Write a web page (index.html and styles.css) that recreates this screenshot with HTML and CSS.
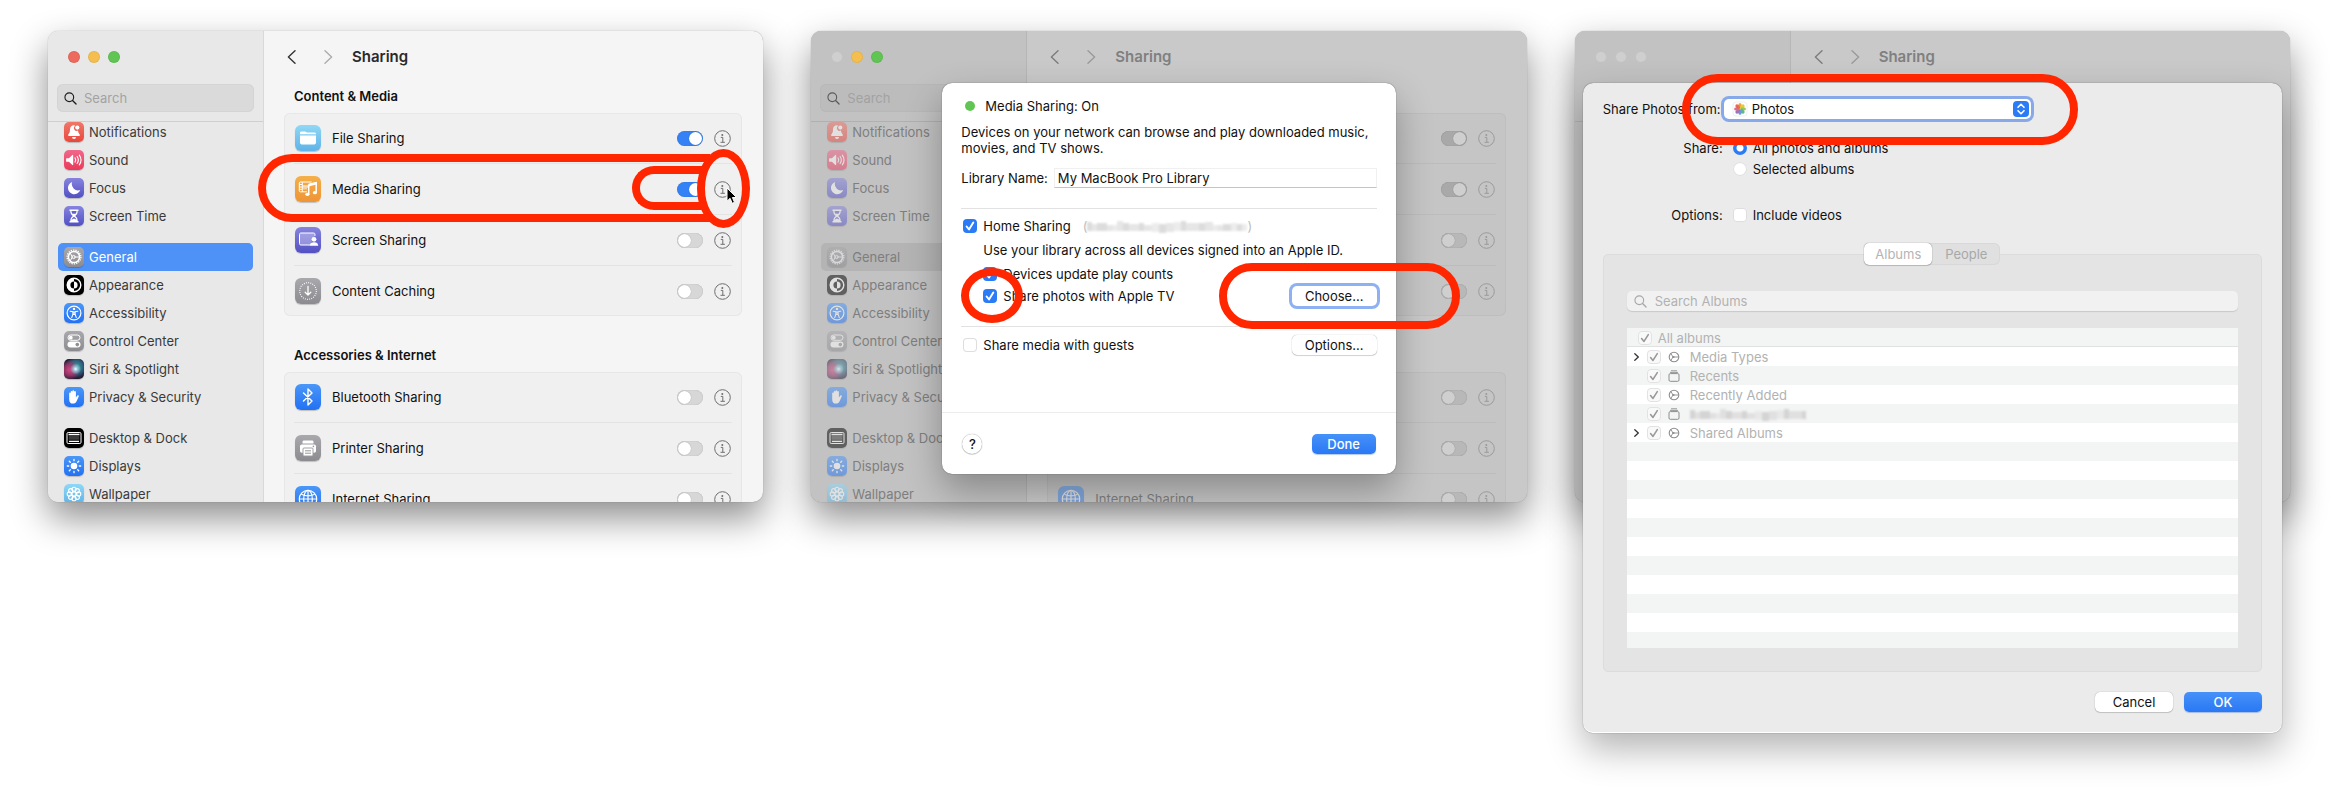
FILE: index.html
```html
<!DOCTYPE html>
<html lang="en">
<head>
  <meta charset="UTF-8">
  <title>Sharing</title>
  <link rel="stylesheet" href="styles.css">
</head>
<body>
  <svg class="symbols" xmlns="http://www.w3.org/2000/svg">
    <symbol id="search" viewBox="0 0 14 14"><circle cx="5.7" cy="5.7" r="4.7" fill="none" stroke="currentColor" stroke-width="1.2"/><path d="M9.2 9.2l3.8 3.8" stroke="currentColor" stroke-width="1.4" stroke-linecap="round"/></symbol>
    <symbol id="back" viewBox="0 0 9 14"><path d="M8 .8L1.4 7 8 13.2" fill="none" stroke="currentColor" stroke-width="1.4" stroke-linecap="round" stroke-linejoin="round"/></symbol>
    <symbol id="forward" viewBox="0 0 9 14"><path d="M1 .8L7.6 7 1 13.2" fill="none" stroke="currentColor" stroke-width="1.4" stroke-linecap="round" stroke-linejoin="round"/></symbol>
    <symbol id="twist" viewBox="0 0 5 8"><path d="M.8 .8L4.300 4 .8 7.200" fill="none" stroke="currentColor" stroke-width="1.300" stroke-linecap="round" stroke-linejoin="round"/></symbol>
    <symbol id="info" viewBox="0 0 17 17"><circle cx="8.500" cy="8.500" r="7.800" fill="none" stroke="currentColor" stroke-width="1"/><circle cx="8.300" cy="4.900" r="1" fill="currentColor"/><path d="M6.800 7.400h2v4.800M6.500 12.300h4.400" fill="none" stroke="currentColor" stroke-width="1"/></symbol>
    <symbol id="bell" viewBox="0 0 20 20"><path d="M10 3.300c-2.600 0-4 1.900-4 4.300 0 2.800-.6 3.700-1.700 4.900-.5.600-.2 1.500.7 1.500h10c.9 0 1.200-.9.700-1.500-1-1.100-1.500-1.900-1.700-3.900a2.800 2.800 0 0 1-2.700-4.900A4.400 4.400 0 0 0 10 3.300zM8 15h4a2 2 0 0 1-4 0z" fill="#fff"/><circle cx="13.300" cy="5.600" r="2.100" fill="#fff"/></symbol>
    <symbol id="sound" viewBox="0 0 20 20"><path d="M2.700 8.200h2.200L8.400 5c.4-.3.800-.1.800.4v9.200c0 .5-.4.700-.8.400l-3.500-3.200H2.700c-.4 0-.6-.2-.6-.6V8.800c0-.4.200-.6.600-.6z" fill="#fff"/><path d="M11 7.900q1.500 2.100 0 4.200M13.100 6.500q2.500 3.500 0 7M15.300 5.100q3.500 4.900 0 9.800" fill="none" stroke="#fff" stroke-width="1.100" stroke-linecap="round"/></symbol>
    <symbol id="moon" viewBox="0 0 20 20"><path d="M8.200 3.900a6.300 6.300 0 1 0 8 8.100A6.300 6.300 0 0 1 8.200 3.900z" fill="#fff"/></symbol>
    <symbol id="hourglass" viewBox="0 0 20 20"><path d="M5.500 3.500h9v1.400h-.8c0 2.500-.9 3.800-2.500 5.100 1.600 1.300 2.500 2.600 2.500 5.100h.8v1.400h-9v-1.400h.8c0-2.500.9-3.800 2.500-5.100-1.600-1.300-2.500-2.600-2.500-5.100h-.8z" fill="#fff"/><path d="M7.500 5h5c0 1.200-.3 2-.9 2.700H8.400C7.800 7 7.500 6.200 7.500 5zM10 10.800c1.400 1 2.200 1.800 2.400 3l-2.400-1.400-2.400 1.400c.2-1.200 1-2 2.400-3z" fill="#6461c9"/></symbol>
    <symbol id="gear" viewBox="0 0 20 20"><circle cx="10" cy="10" r="6.900" fill="none" stroke="#fff" stroke-width="1.300" stroke-dasharray="1.300 1.110"/><circle cx="10" cy="10" r="5.600" fill="none" stroke="#fff" stroke-width="1.500"/><path d="M8.300 10L6.200 6.100M9.600 10h5.600M8.300 10l-2.100 3.900" stroke="#fff" stroke-width="1"/><circle cx="9.600" cy="10" r="1.600" fill="none" stroke="#fff" stroke-width="1"/></symbol>
    <symbol id="appearance" viewBox="0 0 20 20"><circle cx="10" cy="10" r="6.800" fill="#000" stroke="#fff" stroke-width="1.400"/><path d="M10 3.200a6.800 6.800 0 0 0 0 13.600v-3.200a3.600 3.600 0 0 1 0-7.200z" fill="#fff"/><path d="M10 6.400a3.600 3.600 0 0 1 0 7.200z" fill="#fff"/></symbol>
    <symbol id="accessibility" viewBox="0 0 20 20"><circle cx="10" cy="10" r="6.900" fill="none" stroke="#fff" stroke-width="1.200"/><circle cx="10" cy="5.900" r="1.200" fill="#fff"/><path d="M6.200 8.200l2.700.6v2.400l-1.200 3.400M13.800 8.200l-2.700.6v2.400l1.200 3.400M9.200 9h1.600v2.500H9.200z" fill="none" stroke="#fff" stroke-width="1.100" stroke-linecap="round"/></symbol>
    <symbol id="control" viewBox="0 0 20 20"><rect x="4" y="4" width="12" height="5.300" rx="2.650" fill="none" stroke="#fff" stroke-width="1"/><circle cx="6.800" cy="6.650" r="1.900" fill="#fff"/><rect x="3.500" y="10.600" width="13" height="6" rx="3" fill="#fff"/><circle cx="13.300" cy="13.600" r="1.800" fill="#8e8e93"/></symbol>
    <symbol id="hand" viewBox="0 0 20 20"><path d="M5.200 10.300V6.200c0-1.100 1.500-1.100 1.500 0V5c0-1.200 1.700-1.200 1.700 0v-.9c0-1.200 1.800-1.200 1.800 0v.8c0-1.200 1.700-1.200 1.700 0v5.700l1.300-1.800c.8-1 2-.2 1.500.8l-2 4.300c-.8 1.800-2 2.700-3.800 2.700-2.500 0-3.700-1.600-3.700-4.200z" fill="#fff"/></symbol>
    <symbol id="dock" viewBox="0 0 20 20"><rect x="3" y="4.500" width="14" height="11" rx="1.200" fill="none" stroke="#fff" stroke-width="1"/><path d="M4.500 6.500h11M5 13.300h10" stroke="#fff" stroke-width="1.300"/><path d="M4.800 8h10.400v3.800H4.800z" fill="#3a3a3c"/></symbol>
    <symbol id="sun" viewBox="0 0 20 20"><circle cx="10" cy="10" r="3.300" fill="#fff"/><path d="M10 3.300v1.400M10 15.300v1.400M3.300 10h1.400M15.300 10h1.400M5.300 5.300l1 1M13.700 13.700l1 1M5.300 14.700l1-1M13.700 6.300l1-1" stroke="#fff" stroke-width="1.300" stroke-linecap="round"/></symbol>
    <symbol id="flower" viewBox="0 0 20 20"><g fill="none" stroke="#fff" stroke-width="1.100"><circle cx="10" cy="10" r="2"/><circle cx="10" cy="5.300" r="2.100"/><circle cx="13.300" cy="6.700" r="2.100"/><circle cx="14.700" cy="10" r="2.100"/><circle cx="13.300" cy="13.300" r="2.100"/><circle cx="10" cy="14.700" r="2.100"/><circle cx="6.700" cy="13.300" r="2.100"/><circle cx="5.300" cy="10" r="2.100"/><circle cx="6.700" cy="6.700" r="2.100"/></g></symbol>
    <symbol id="folder" viewBox="0 0 26 26"><path d="M5 9.300V8c0-1 .6-1.600 1.600-1.600h3.200c1.400 0 1.600 1.200 3 1.200h6.600c1 0 1.600.6 1.600 1.700zM5 10.400h16v7.200c0 1.100-.7 1.800-1.800 1.800H6.800c-1.100 0-1.800-.7-1.800-1.800z" fill="#fff"/></symbol>
    <symbol id="media" viewBox="0 0 26 26"><path d="M12 15.800H5.300c-.6 0-1-.4-1-1V7c0-.6.400-1 1-1h11.400M7.300 6v9.800M4.300 8.500h3M4.300 11h3M4.300 13.300h3M7.300 11h6" fill="none" stroke="#fff" stroke-width="1"/><path d="M8 9h5v1.500H8zM8 12h4v1.500H8z" fill="#fff" opacity=".5"/><path d="M13.700 8.500l7.500-1.900v9.600M13.700 8.500v9.800" fill="none" stroke="#fff" stroke-width="1.500"/><path d="M13.700 8l7.500-1.900v2.400l-7.500 1.900z" fill="#fff"/><ellipse cx="12.400" cy="18.300" rx="2.100" ry="1.600" fill="#fff"/><ellipse cx="19.900" cy="16.700" rx="2.100" ry="1.600" fill="#fff"/></symbol>
    <symbol id="screen" viewBox="0 0 26 26"><path d="M15 18H6c-1 0-1.500-.5-1.500-1.500v-9C4.500 6.500 5 6 6 6h12.500c1 0 1.500.5 1.500 1.500v1.300" fill="#fff" fill-opacity=".3" stroke="#fff" stroke-width="1"/><circle cx="19" cy="12.300" r="2.400" fill="#fff"/><path d="M14.800 18.800c0-2.500 1.700-3.600 4.200-3.600s4.200 1.100 4.200 3.600z" fill="#fff"/></symbol>
    <symbol id="caching" viewBox="0 0 26 26"><circle cx="13" cy="13" r="8.300" fill="none" stroke="#fff" stroke-width="1.200" stroke-dasharray=".9 1.270"/><path d="M13 8.500v8.500M10.200 14.300l2.800 2.800 2.800-2.800" fill="none" stroke="#fff" stroke-width="1.300" stroke-linecap="round" stroke-linejoin="round"/></symbol>
    <symbol id="bluetooth" viewBox="0 0 26 26"><path d="M8.500 9l8.500 8-4 4V5l4 4-8.500 8" fill="none" stroke="#fff" stroke-width="1.400" stroke-linejoin="round" stroke-linecap="round"/></symbol>
    <symbol id="printer" viewBox="0 0 26 26"><path d="M7.500 8.600V7c0-1 .6-1.500 1.500-1.500h8c.9 0 1.500.5 1.500 1.500v1.600z" fill="#fff"/><rect x="5" y="9.400" width="16" height="8.400" rx="1.800" fill="#fff"/><rect x="8" y="13" width="10" height="8" rx="1" fill="#fff" stroke="#98989d" stroke-width=".9"/><path d="M10 15.800h6M10 18.200h6" stroke="#98989d" stroke-width="1"/><circle cx="18.400" cy="11.400" r=".8" fill="#98989d"/></symbol>
    <symbol id="globe" viewBox="0 0 26 26"><g fill="none" stroke="#fff" stroke-width="1.200"><circle cx="13" cy="13" r="8.700"/><ellipse cx="13" cy="13" rx="4.300" ry="8.700"/><path d="M4.300 13h17.400M13 4.300v17.400M6.300 8.300q6.700 3.200 13.400 0M6.300 17.700q6.700-3.200 13.400 0"/></g></symbol>
    <symbol id="smart" viewBox="0 0 12 12"><circle cx="6" cy="6" r="4.800" fill="none" stroke="currentColor" stroke-width="1.100"/><path d="M4.900 6L3 2.500M5.500 6h5M4.900 6L3 9.500" stroke="currentColor" stroke-width=".9"/><circle cx="5.500" cy="6" r="1.100" fill="currentColor"/></symbol>
    <symbol id="album" viewBox="0 0 12 12"><rect x="1" y="3.600" width="10" height="7.700" rx="1.300" fill="none" stroke="currentColor" stroke-width="1"/><path d="M2 2.400h8M3 .8h6" stroke="currentColor" stroke-width=".9"/></symbol>
    <symbol id="photos" viewBox="0 0 16 16"><rect x="1" y="1" width="14" height="14" rx="3" fill="#fff" stroke="#e4e4e4" stroke-width=".6"/><g opacity=".9"><ellipse cx="8" cy="4.800" rx="1.800" ry="2.800" fill="#f49b26"/><ellipse cx="8" cy="4.800" rx="1.800" ry="2.800" fill="#d9c72a" transform="rotate(45 8 8)"/><ellipse cx="8" cy="4.800" rx="1.800" ry="2.800" fill="#8cc152" transform="rotate(90 8 8)"/><ellipse cx="8" cy="4.800" rx="1.800" ry="2.800" fill="#4fae8a" transform="rotate(135 8 8)"/><ellipse cx="8" cy="4.800" rx="1.800" ry="2.800" fill="#5a8fd6" transform="rotate(180 8 8)"/><ellipse cx="8" cy="4.800" rx="1.800" ry="2.800" fill="#8d68b8" transform="rotate(225 8 8)"/><ellipse cx="8" cy="4.800" rx="1.800" ry="2.800" fill="#d0628f" transform="rotate(270 8 8)"/><ellipse cx="8" cy="4.800" rx="1.800" ry="2.800" fill="#e8573f" transform="rotate(315 8 8)"/></g></symbol>
    <symbol id="updown" viewBox="0 0 16 16"><path d="M5 6.300l3-3 3 3M5 9.700l3 3 3-3" fill="none" stroke="#fff" stroke-width="1.600" stroke-linecap="round" stroke-linejoin="round"/></symbol>
    <symbol id="mosaic" viewBox="0 0 160 14"><path d="M0 3h5v9H0zM10 4h10v8H10zM36 4h6v8h-6zM52 4h5v8h-5zM72 5h7v9h-7zM94 2h5v10h-5zM112 4h6v8h-6zM136 5h8v7h-8zM150 5h5v7h-5z" fill="#d4d4d4"/><path d="M5 5h5v7H5zM20 6h6v6h-6zM30 2h6v10h-6zM42 5h10v7H42zM57 6h8v6h-8zM79 4h8v9h-8zM99 4h13v8H99zM118 3h8v9h-8zM130 6h6v6h-6z" fill="#e0e0e0"/><path d="M26 6h4v6h-4zM65 4h7v9h-7zM87 3h7v9h-7zM126 6h4v6h-4zM144 4h6v8h-6zM155 5h5v7h-5z" fill="#e8e8e8"/></symbol>
  </svg>

  <main class="shots">
    <section class="window">
      <aside class="sidebar">
        <div class="lights"><span class="light red"></span><span class="light yellow"></span><span class="light green"></span></div>
        <label class="search"><svg><use href="#search"/></svg><input type="search" placeholder="Search" aria-label="Search"></label>
        <nav class="nav">
          <div class="nav-group">
            <a href="#"><svg class="icon c-red"><use href="#bell"/></svg>Notifications</a>
            <a href="#"><svg class="icon c-pink"><use href="#sound"/></svg>Sound</a>
            <a href="#"><svg class="icon c-indigo"><use href="#moon"/></svg>Focus</a>
            <a href="#"><svg class="icon c-indigo"><use href="#hourglass"/></svg>Screen Time</a>
          </div>
          <div class="nav-group">
            <a href="#" class="active"><svg class="icon c-gray"><use href="#gear"/></svg>General</a>
            <a href="#"><svg class="icon c-black"><use href="#appearance"/></svg>Appearance</a>
            <a href="#"><svg class="icon c-blue"><use href="#accessibility"/></svg>Accessibility</a>
            <a href="#"><svg class="icon c-gray"><use href="#control"/></svg>Control Center</a>
            <a href="#"><span class="icon c-siri"></span>Siri &amp; Spotlight</a>
            <a href="#"><svg class="icon c-blue"><use href="#hand"/></svg>Privacy &amp; Security</a>
          </div>
          <div class="nav-group">
            <a href="#"><svg class="icon c-black"><use href="#dock"/></svg>Desktop &amp; Dock</a>
            <a href="#"><svg class="icon c-blue"><use href="#sun"/></svg>Displays</a>
            <a href="#"><svg class="icon c-sky"><use href="#flower"/></svg>Wallpaper</a>
          </div>
        </nav>
      </aside>
      <div class="pane">
        <header class="toolbar">
          <button class="arrow" aria-label="Back"><svg><use href="#back"/></svg></button>
          <button class="arrow off" aria-label="Forward"><svg><use href="#forward"/></svg></button>
          <h1>Sharing</h1>
        </header>
        <h2>Content &amp; Media</h2>
        <ul class="card">
          <li><svg class="icon c-sky"><use href="#folder"/></svg><label for="a-file">File Sharing</label><input type="checkbox" class="switch" id="a-file" checked><button class="info" aria-label="File Sharing info"><svg><use href="#info"/></svg></button></li>
          <li><svg class="icon c-orange"><use href="#media"/></svg><label for="a-media">Media Sharing</label><input type="checkbox" class="switch" id="a-media" checked><button class="info" aria-label="Media Sharing info"><svg><use href="#info"/></svg></button></li>
          <li><svg class="icon c-indigo"><use href="#screen"/></svg><label for="a-screen">Screen Sharing</label><input type="checkbox" class="switch" id="a-screen"><button class="info" aria-label="Screen Sharing info"><svg><use href="#info"/></svg></button></li>
          <li><svg class="icon c-gray"><use href="#caching"/></svg><label for="a-cache">Content Caching</label><input type="checkbox" class="switch" id="a-cache"><button class="info" aria-label="Content Caching info"><svg><use href="#info"/></svg></button></li>
        </ul>
        <h2>Accessories &amp; Internet</h2>
        <ul class="card">
          <li><svg class="icon c-blue"><use href="#bluetooth"/></svg><label for="a-bt">Bluetooth Sharing</label><input type="checkbox" class="switch" id="a-bt"><button class="info" aria-label="Bluetooth Sharing info"><svg><use href="#info"/></svg></button></li>
          <li><svg class="icon c-gray"><use href="#printer"/></svg><label for="a-print">Printer Sharing</label><input type="checkbox" class="switch" id="a-print"><button class="info" aria-label="Printer Sharing info"><svg><use href="#info"/></svg></button></li>
          <li><svg class="icon c-blue"><use href="#globe"/></svg><label for="a-net">Internet Sharing</label><input type="checkbox" class="switch" id="a-net"><button class="info" aria-label="Internet Sharing info"><svg><use href="#info"/></svg></button></li>
        </ul>
      </div>
      <span class="mark mark-row"></span>
      <span class="mark mark-switch"></span>
      <span class="mark mark-info"></span>
      <svg class="cursor" viewBox="0 0 12 18"><path d="M1 1v13.200l3.100-2.900 2.100 5 2.300-1-2.100-4.800h4.200z" fill="#000" stroke="#fff" stroke-width="1"/></svg>
    </section>

    <section class="window dimmed">
      <aside class="sidebar">
        <div class="lights"><span class="light"></span><span class="light yellow"></span><span class="light green"></span></div>
        <label class="search"><svg><use href="#search"/></svg><input type="search" placeholder="Search" aria-label="Search"></label>
        <nav class="nav">
          <div class="nav-group">
            <a href="#"><svg class="icon c-red"><use href="#bell"/></svg>Notifications</a>
            <a href="#"><svg class="icon c-pink"><use href="#sound"/></svg>Sound</a>
            <a href="#"><svg class="icon c-indigo"><use href="#moon"/></svg>Focus</a>
            <a href="#"><svg class="icon c-indigo"><use href="#hourglass"/></svg>Screen Time</a>
          </div>
          <div class="nav-group">
            <a href="#" class="active"><svg class="icon c-gray"><use href="#gear"/></svg>General</a>
            <a href="#"><svg class="icon c-black"><use href="#appearance"/></svg>Appearance</a>
            <a href="#"><svg class="icon c-blue"><use href="#accessibility"/></svg>Accessibility</a>
            <a href="#"><svg class="icon c-gray"><use href="#control"/></svg>Control Center</a>
            <a href="#"><span class="icon c-siri"></span>Siri &amp; Spotlight</a>
            <a href="#"><svg class="icon c-blue"><use href="#hand"/></svg>Privacy &amp; Security</a>
          </div>
          <div class="nav-group">
            <a href="#"><svg class="icon c-black"><use href="#dock"/></svg>Desktop &amp; Dock</a>
            <a href="#"><svg class="icon c-blue"><use href="#sun"/></svg>Displays</a>
            <a href="#"><svg class="icon c-sky"><use href="#flower"/></svg>Wallpaper</a>
          </div>
        </nav>
      </aside>
      <div class="pane">
        <header class="toolbar">
          <button class="arrow" aria-label="Back"><svg><use href="#back"/></svg></button>
          <button class="arrow off" aria-label="Forward"><svg><use href="#forward"/></svg></button>
          <h1>Sharing</h1>
        </header>
        <h2>Content &amp; Media</h2>
        <ul class="card">
          <li><svg class="icon c-sky"><use href="#folder"/></svg><label for="b-file">File Sharing</label><input type="checkbox" class="switch" id="b-file" checked><button class="info" aria-label="File Sharing info"><svg><use href="#info"/></svg></button></li>
          <li><svg class="icon c-orange"><use href="#media"/></svg><label for="b-media">Media Sharing</label><input type="checkbox" class="switch" id="b-media" checked><button class="info" aria-label="Media Sharing info"><svg><use href="#info"/></svg></button></li>
          <li><svg class="icon c-indigo"><use href="#screen"/></svg><label for="b-screen">Screen Sharing</label><input type="checkbox" class="switch" id="b-screen"><button class="info" aria-label="Screen Sharing info"><svg><use href="#info"/></svg></button></li>
          <li><svg class="icon c-gray"><use href="#caching"/></svg><label for="b-cache">Content Caching</label><input type="checkbox" class="switch" id="b-cache"><button class="info" aria-label="Content Caching info"><svg><use href="#info"/></svg></button></li>
        </ul>
        <h2>Accessories &amp; Internet</h2>
        <ul class="card">
          <li><svg class="icon c-blue"><use href="#bluetooth"/></svg><label for="b-bt">Bluetooth Sharing</label><input type="checkbox" class="switch" id="b-bt"><button class="info" aria-label="Bluetooth Sharing info"><svg><use href="#info"/></svg></button></li>
          <li><svg class="icon c-gray"><use href="#printer"/></svg><label for="b-print">Printer Sharing</label><input type="checkbox" class="switch" id="b-print"><button class="info" aria-label="Printer Sharing info"><svg><use href="#info"/></svg></button></li>
          <li><svg class="icon c-blue"><use href="#globe"/></svg><label for="b-net">Internet Sharing</label><input type="checkbox" class="switch" id="b-net"><button class="info" aria-label="Internet Sharing info"><svg><use href="#info"/></svg></button></li>
        </ul>
      </div>

      <div class="sheet media-sheet" role="dialog" aria-label="Media Sharing">
        <div class="media-body">
          <p class="status">Media Sharing: On</p>
          <p class="about">Devices on your network can browse and play downloaded music, movies, and TV shows.</p>
          <div class="library">
            <label for="library">Library Name:</label>
            <input type="text" id="library" value="My MacBook Pro Library">
          </div>
          <div class="home">
            <div class="line"><input type="checkbox" class="check" id="home" checked><label for="home">Home Sharing</label><span class="account">(<svg><use href="#mosaic"/></svg>)</span></div>
            <p class="hint">Use your library across all devices signed into an Apple ID.</p>
            <div class="line sub"><input type="checkbox" class="check" id="counts" checked><label for="counts">Devices update play counts</label></div>
            <div class="line sub"><input type="checkbox" class="check" id="photos-tv" checked><label for="photos-tv">Share photos with Apple TV</label><button class="btn focused">Choose...</button></div>
          </div>
          <div class="line guests"><input type="checkbox" class="check" id="guests"><label for="guests">Share media with guests</label><button class="btn">Options...</button></div>
        </div>
        <footer class="media-footer">
          <button class="help" aria-label="Help">?</button>
          <button class="btn primary">Done</button>
        </footer>
      </div>
      <span class="mark mark-check"></span>
      <span class="mark mark-choose"></span>
    </section>

    <section class="window dimmed">
      <aside class="sidebar">
        <div class="lights"><span class="light"></span><span class="light"></span><span class="light"></span></div>
        <div class="search"></div>
        <div class="nav"></div>
      </aside>
      <div class="pane">
        <header class="toolbar">
          <button class="arrow" aria-label="Back"><svg><use href="#back"/></svg></button>
          <button class="arrow off" aria-label="Forward"><svg><use href="#forward"/></svg></button>
          <h1>Sharing</h1>
        </header>
      </div>

      <div class="sheet photo-sheet" role="dialog" aria-label="Share photos">
        <div class="form">
          <label for="source" class="source-label">Share Photos from:</label>
          <div class="popup">
            <svg class="popup-icon"><use href="#photos"/></svg>
            <select id="source"><option>Photos</option></select>
            <svg class="popup-arrows"><use href="#updown"/></svg>
          </div>
          <span class="field">Share:</span>
          <div class="radios">
            <div class="line"><input type="radio" name="share" id="all" checked><label for="all">All photos and albums</label></div>
            <div class="line"><input type="radio" name="share" id="selected"><label for="selected">Selected albums</label></div>
          </div>
          <span class="field">Options:</span>
          <div class="line"><input type="checkbox" class="check" id="videos"><label for="videos">Include videos</label></div>
        </div>
        <div class="tabs"><button class="tab active" disabled>Albums</button><button class="tab" disabled>People</button></div>
        <div class="box">
          <label class="album-search"><svg><use href="#search"/></svg><input type="search" placeholder="Search Albums" aria-label="Search Albums" disabled></label>
          <div class="list">
            <table class="albums">
              <thead>
                <tr><th colspan="4"><span class="all"><input type="checkbox" class="check" id="al-all" checked disabled><label for="al-all">All albums</label></span></th></tr>
              </thead>
              <tbody>
                <tr><td class="twist"><svg><use href="#twist"/></svg></td><td><input type="checkbox" class="check" id="al-1" checked disabled></td><td><svg class="kind"><use href="#smart"/></svg></td><td><label for="al-1">Media Types</label></td></tr>
                <tr><td class="twist"></td><td><input type="checkbox" class="check" id="al-2" checked disabled></td><td><svg class="kind"><use href="#album"/></svg></td><td><label for="al-2">Recents</label></td></tr>
                <tr><td class="twist"></td><td><input type="checkbox" class="check" id="al-3" checked disabled></td><td><svg class="kind"><use href="#smart"/></svg></td><td><label for="al-3">Recently Added</label></td></tr>
                <tr><td class="twist"></td><td><input type="checkbox" class="check" id="al-4" checked disabled aria-label="Album"></td><td><svg class="kind"><use href="#album"/></svg></td><td><svg class="redacted" viewBox="0 0 116 14" preserveAspectRatio="xMinYMid slice"><use href="#mosaic" width="160" height="14"/></svg></td></tr>
                <tr><td class="twist"><svg><use href="#twist"/></svg></td><td><input type="checkbox" class="check" id="al-5" checked disabled></td><td><svg class="kind"><use href="#smart"/></svg></td><td><label for="al-5">Shared Albums</label></td></tr>
              </tbody>
            </table>
          </div>
        </div>
        <footer class="photo-footer">
          <button class="btn wide">Cancel</button>
          <button class="btn wide primary">OK</button>
        </footer>
      </div>
      <span class="mark mark-source"></span>
    </section>
  </main>
</body>
</html>
```
FILE: styles.css
```css
* {
  box-sizing: border-box;
}

body {
  margin: 0;
  font-family: Inter, "Liberation Sans", sans-serif;
  font-size: 13px;
  line-height: 16px;
  background: #ffffff;
  color: #1c1c1c;
}

h1, h2, p, ul {
  margin: 0;
  padding: 0;
}

button, input, select {
  font: inherit;
  color: inherit;
  margin: 0;
}

svg {
  display: block;
  flex: none;
}

.symbols {
  display: none;
}

.shots {
  display: grid;
  grid-template-columns: repeat(3, minmax(0, 1fr));
  gap: 48px;
  align-items: start;
  min-height: 100vh;
  padding: 31px 47px 60px 48px;
}

/* window */
.window {
  position: relative;
  display: flex;
  height: 471px;
  border-radius: 10px;
  background: #f5f5f5;
  box-shadow: 0 0 1px rgba(0, 0, 0, 0.4), 0 16px 36px rgba(0, 0, 0, 0.45);
}

.sidebar {
  display: flex;
  flex-direction: column;
  flex: 0 0 216px;
  background: #e8e8e8;
  border-right: 1px solid #d9d9d9;
  border-radius: 10px 0 0 10px;
  overflow: hidden;
}

.lights {
  display: flex;
  gap: 8px;
  padding: 20px 20px 21px;
}

.light {
  width: 12px;
  height: 12px;
  border-radius: 50%;
  background: #cfcfcf;
  box-shadow: inset 0 0 0 1px rgba(0, 0, 0, 0.06);
}

.light.red { background: #ed6a5e; }
.light.yellow { background: #f5bf4f; }
.light.green { background: #61c554; }

.search {
  display: flex;
  align-items: center;
  height: 28px;
  margin: 0 9px;
  padding: 0 7px;
  gap: 7px;
  border-radius: 6px;
  background: #dadada;
  box-shadow: inset 0 0 0 1px #d4d4d4;
}

.search svg {
  width: 13px;
  height: 13px;
}

.search input,
.album-search input {
  flex: 1;
  min-width: 0;
  padding: 0;
  border: none;
  outline: none;
  background: none;
}

.search input::placeholder {
  color: #a3a3a3;
}

.nav {
  flex: 1;
  min-height: 0;
  margin-top: 9px;
  padding: 0 10px;
  border-top: 1px solid #cfcfcf;
  overflow: hidden;
}

.nav-group {
  margin-bottom: 13px;
}

.nav-group:first-child {
  margin-top: -4px;
}

.nav a {
  display: flex;
  align-items: center;
  gap: 5px;
  height: 28px;
  padding: 0 6px;
  border-radius: 5px;
  color: #3a3a3a;
  text-decoration: none;
}

.nav a.active {
  background: #4f92f7;
  color: #ffffff;
}

.icon {
  width: 20px;
  height: 20px;
  border-radius: 5px;
  box-shadow: 0 1px 1px rgba(0, 0, 0, 0.2);
}

.c-red { background: linear-gradient(#f0776a, #e9483b); }
.c-pink { background: linear-gradient(#f0688a, #ea3a5b); }
.c-indigo { background: linear-gradient(#8684de, #5250c4); }
.c-gray { background: linear-gradient(#a9a9ad, #8c8c90); }
.c-black { background: #000000; }
.c-blue { background: linear-gradient(#4a97f8, #2271f3); }
.c-sky { background: linear-gradient(#8fd8f7, #5fb3e6); }
.c-orange { background: linear-gradient(#f4b04a, #ef9434); }

.c-siri {
  background:
    radial-gradient(circle at 58% 50%, #ffffff 0, rgba(150, 220, 240, 0.8) 14%, transparent 36%),
    radial-gradient(circle at 28% 55%, #d0457c 0, rgba(170, 55, 110, 0.8) 30%, transparent 56%),
    radial-gradient(circle at 62% 40%, #35aaa0 0, rgba(50, 110, 140, 0.8) 38%, transparent 64%),
    #241b33;
}

/* right pane */
.pane {
  flex: 1;
  min-width: 0;
  padding: 0 21px 0 20px;
  overflow: hidden;
  border-radius: 0 10px 10px 0;
}

.toolbar {
  display: flex;
  align-items: center;
  gap: 28px;
  height: 52px;
}

.toolbar h1 {
  margin-left: -9px;
  font-size: 15px;
  font-weight: 600;
  color: #2a2a2a;
}

.arrow {
  padding: 0;
  border: none;
  background: none;
  color: #333333;
}

.arrow:first-child {
  margin-left: 3px;
}

.arrow.off {
  color: #acacac;
}

.arrow svg {
  width: 9px;
  height: 14px;
}

h2 {
  margin: 31px 10px 9px;
  font-size: 13px;
  font-weight: 600;
  color: #111111;
}

.toolbar + h2 {
  margin-top: 5px;
}

.card {
  padding: 0 10px;
  list-style: none;
  border-radius: 6px;
  background: #f0f0f0;
  box-shadow: inset 0 0 0 1px #e7e7e7;
}

.card li {
  display: flex;
  align-items: center;
  gap: 11px;
  height: 50px;
}

.card li + li {
  height: 51px;
  border-top: 1px solid #e4e4e4;
}

.card .icon {
  width: 26px;
  height: 26px;
  margin-left: 1px;
  border-radius: 6px;
}

.card label {
  flex: 1;
  color: #111111;
}

.switch {
  appearance: none;
  width: 26px;
  height: 15px;
  border-radius: 8px;
  background: #d7d7d7;
  box-shadow: inset 0 0 1px rgba(0, 0, 0, 0.3);
}

.switch::before {
  content: '';
  display: block;
  width: 13px;
  height: 13px;
  margin: 1px;
  border-radius: 50%;
  background: #ffffff;
  box-shadow: 0 0 1px rgba(0, 0, 0, 0.3);
}

.switch:checked {
  background: #3482f6;
}

.switch:checked::before {
  margin-left: 12px;
}

.info {
  padding: 0;
  margin-right: 1px;
  border: none;
  background: none;
  color: #6e6e6e;
}

.info svg {
  width: 17px;
  height: 17px;
}

/* window behind a sheet */
.dimmed,
.dimmed .pane {
  background: #c9c9c9;
}

.dimmed .sidebar {
  background: #c2c2c2;
  border-color: #b6b6b6;
}

.dimmed .search {
  background: #bcbcbc;
  box-shadow: inset 0 0 0 1px #b8b8b8;
}

.dimmed .search svg {
  opacity: 0.6;
}

.dimmed .search input::placeholder {
  color: #a2a2a2;
}

.dimmed .nav {
  border-color: #b0b0b0;
}

.dimmed .nav a {
  color: #7e7e7e;
}

.dimmed .nav a.active {
  background: #b4b4b4;
}

.dimmed .icon {
  opacity: 0.5;
}

.dimmed h1,
.dimmed h2,
.dimmed .card label {
  color: #808080;
}

.dimmed .arrow {
  color: #7c7c7c;
}

.dimmed .arrow.off,
.dimmed .info {
  color: #9a9a9a;
}

.dimmed .card {
  background: #c5c5c5;
  box-shadow: inset 0 0 0 1px #bebebe;
}

.dimmed .card li {
  border-color: #bcbcbc;
}

.dimmed .switch {
  background: #b8b8b8;
}

.dimmed .switch:checked {
  background: #a9a9a9;
}

.dimmed .switch::before {
  background: #cfcfcf;
}

/* sheets */
.sheet {
  position: absolute;
  top: 52px;
  border-radius: 10px;
  color: #111111;
  box-shadow: 0 0 1px rgba(0, 0, 0, 0.7), 0 16px 36px rgba(0, 0, 0, 0.3);
}

.media-sheet {
  left: 131px;
  right: 131px;
  background: #ffffff;
}

.media-body {
  padding: 15px 19px 0;
}

.status {
  display: flex;
  align-items: center;
  gap: 10px;
  padding-left: 4px;
}

.status::before {
  content: '';
  width: 10px;
  height: 10px;
  border-radius: 50%;
  background: #61c554;
}

.about {
  margin-top: 10px;
}

.library {
  display: flex;
  align-items: center;
  gap: 6px;
  margin-top: 12px;
}

.library input {
  flex: 1;
  min-width: 0;
  height: 20px;
  padding: 0 3px;
  border: 1px solid #f0f0f0;
  border-bottom-color: #c4c4c4;
  background: #ffffff;
}

.home {
  margin-top: 20px;
  padding: 9px 0 22px 2px;
  border-top: 1px solid #e2e2e2;
  border-bottom: 1px solid #e2e2e2;
}

.line {
  display: flex;
  align-items: center;
  gap: 6px;
  height: 16px;
}

.line .btn {
  margin-left: auto;
}

.hint {
  margin: 8px 0 8px 20px;
}

.sub {
  padding-left: 20px;
}

.sub + .sub {
  margin-top: 6px;
}

.guests {
  padding-left: 2px;
  margin-top: 10px;
}

.account {
  display: flex;
  align-items: center;
  margin-left: 6px;
  color: #bdbdbd;
}

.account svg {
  width: 160px;
  height: 14px;
  opacity: 0.8;
  filter: blur(1px);
}

.check,
input[type="radio"] {
  appearance: none;
  flex: none;
  width: 14px;
  height: 14px;
  border-radius: 4px;
  background: #ffffff;
  box-shadow: inset 0 0 0 1px #dedede;
}

input[type="radio"] {
  border-radius: 50%;
}

.check:checked {
  background: #2b7bf6 url("data:image/svg+xml,%3Csvg xmlns='http://www.w3.org/2000/svg' viewBox='0 0 14 14' fill='none' stroke='%23fff' stroke-width='1.900' stroke-linecap='round' stroke-linejoin='round'%3E%3Cpath d='M3.600 7.500l2.400 2.900 4.300-6.800'/%3E%3C/svg%3E");
  box-shadow: none;
}

input[type="radio"]:checked {
  background: radial-gradient(circle, #ffffff 0 3px, #2b7bf6 4px);
  box-shadow: none;
}

.check:disabled {
  background: #f9f9f9 url("data:image/svg+xml,%3Csvg xmlns='http://www.w3.org/2000/svg' viewBox='0 0 14 14' fill='none' stroke='%23999' stroke-width='1.600' stroke-linecap='round' stroke-linejoin='round'%3E%3Cpath d='M3.600 7.500l2.400 2.900 4.300-6.800'/%3E%3C/svg%3E");
  box-shadow: inset 0 0 0 1px #e2e2e2;
}

.btn {
  height: 20px;
  min-width: 85px;
  padding: 0 10px;
  border: none;
  border-radius: 5px;
  background: #ffffff;
  color: #111111;
  box-shadow: 0 0 1px rgba(0, 0, 0, 0.4), 0 1px 1px rgba(0, 0, 0, 0.15);
}

.btn.focused {
  box-shadow: 0 0 0 3px #8db1f3;
}

.btn.primary {
  min-width: 64px;
  background: linear-gradient(#4691f8, #2a78f5);
  color: #ffffff;
  font-weight: 500;
  box-shadow: 0 1px 1px rgba(0, 80, 200, 0.3);
}

.btn.wide {
  min-width: 78px;
}

.media-footer {
  display: flex;
  align-items: center;
  justify-content: space-between;
  height: 62px;
  margin-top: 59px;
  padding: 0 20px;
  border-top: 1px solid #ededed;
}

.help {
  width: 20px;
  height: 20px;
  padding: 0;
  border: none;
  border-radius: 50%;
  background: #ffffff;
  font-weight: 500;
  box-shadow: 0 0 1px rgba(0, 0, 0, 0.5), 0 1px 1px rgba(0, 0, 0, 0.15);
}

/* photo sheet */
.photo-sheet {
  left: 8px;
  right: 8px;
  padding: 16px 20px 21px;
  background: #ebebeb;
  box-shadow: inset 0 -1px 0 #ffffff, 0 0 1px rgba(0, 0, 0, 0.7), 0 16px 36px rgba(0, 0, 0, 0.3);
}

.form {
  display: grid;
  grid-template-columns: 120px 1fr;
  column-gap: 10px;
}

.form > label,
.field {
  text-align: right;
}

.form > .source-label {
  align-self: center;
  margin-right: 4px;
  white-space: nowrap;
}

.popup {
  position: relative;
  width: 307px;
  margin-left: -9px;
}

.popup select {
  display: block;
  appearance: none;
  width: 100%;
  height: 20px;
  padding: 0 28px;
  border: none;
  border-radius: 5px;
  background: #ffffff;
  box-shadow: 0 0 0 3px #87a9ea;
}

.popup-icon,
.popup-arrows {
  position: absolute;
  top: 2px;
  width: 16px;
  height: 16px;
}

.popup-icon {
  left: 8px;
}

.popup-arrows {
  right: 2px;
  border-radius: 4px;
  background: #2b7bf6;
  pointer-events: none;
}

.radios {
  display: grid;
  gap: 5px;
}

.form > .field,
.radios {
  margin-top: 21px;
}

.radios ~ .field,
.radios ~ .line {
  margin-top: 30px;
}

.tabs {
  position: relative;
  display: flex;
  width: 136px;
  height: 22px;
  margin: 20px auto 0;
  border-radius: 6px;
  background: #e0e0e0;
  box-shadow: inset 0 0 0 1px #d8d8d8;
}

.tab {
  flex: 1;
  padding: 0;
  border: none;
  border-radius: 5px;
  background: none;
  color: #a8a8a8;
}

.tab.active {
  background: #ffffff;
  box-shadow: 0 0 1px rgba(0, 0, 0, 0.6), 0 1px 1px rgba(0, 0, 0, 0.15);
  color: #b4b4b4;
}

.box {
  margin-top: -11px;
  padding: 36px 23px 23px;
  border: 1px solid #dcdcdc;
  border-radius: 5px;
  background: #e4e4e4;
}

.album-search {
  display: flex;
  align-items: center;
  gap: 8px;
  height: 20px;
  padding: 0 7px;
  border-radius: 5px;
  background: #f1f1f1;
  box-shadow: 0 1px 1px rgba(0, 0, 0, 0.12);
  color: #a8a8a8;
}

.album-search svg {
  width: 13px;
  height: 13px;
}

.album-search input::placeholder {
  color: #b2b2b2;
}

.list {
  height: 320px;
  margin-top: 17px;
  background: repeating-linear-gradient(#f3f5f4 0 19px, #ffffff 19px 38px);
}

.albums {
  width: 100%;
  border-collapse: collapse;
  color: #b2b2b2;
}

.albums th,
.albums td {
  height: 19px;
  padding: 0;
  font-weight: 400;
  text-align: left;
  line-height: 16px;
}

.albums th {
  box-shadow: inset 0 -1px 0 #e0e2e1;
}

.albums td:nth-child(1) { width: 20px; }
.albums td:nth-child(2) { width: 21px; }
.albums td:nth-child(3) { width: 22px; }

.albums .check {
  display: block;
}

.all {
  display: flex;
  align-items: center;
  gap: 6px;
  padding-left: 11px;
}

.twist svg {
  width: 5px;
  height: 8px;
  margin-left: 7px;
  color: #333333;
}

.kind {
  width: 12px;
  height: 12px;
  color: #8c8c8c;
}

.redacted {
  width: 116px;
  height: 14px;
  filter: blur(1px);
}

.photo-footer {
  display: flex;
  justify-content: flex-end;
  gap: 11px;
  margin-top: 20px;
}

.photo-footer .primary {
  min-width: 78px;
}

/* red callouts drawn over the windows */
.mark {
  position: absolute;
  border: 8px solid #ff2600;
  border-radius: 36px;
  pointer-events: none;
}

.mark-row {
  top: 123px;
  left: 210px;
  width: 452px;
  height: 68px;
  border-right: none;
  border-radius: 34px 0 0 34px;
}

.mark-switch {
  top: 135px;
  left: 584px;
  width: 71px;
  height: 44px;
  border-right: none;
  border-radius: 22px 0 0 22px;
}

.mark-info {
  top: 118px;
  left: 649px;
  width: 53px;
  height: 79px;
  border-radius: 50%;
}

.cursor {
  position: absolute;
  top: 156px;
  left: 678px;
  width: 12px;
  height: 18px;
}

.mark-check {
  top: 237px;
  left: 150px;
  width: 62px;
  height: 55px;
  border-radius: 50%;
}

.mark-choose {
  top: 232px;
  left: 408px;
  width: 241px;
  height: 66px;
}

.mark-source {
  top: 43px;
  left: 107px;
  width: 396px;
  height: 71px;
}
```
